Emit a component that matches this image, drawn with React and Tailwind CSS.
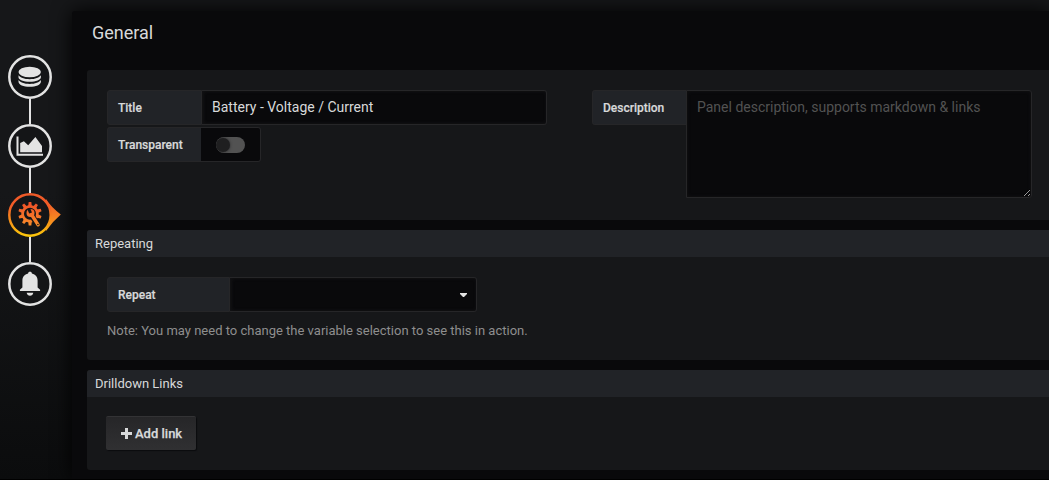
import React from "react";

function Ring({ children, active }) {
  return (
    <div className="relative z-10 flex h-11 w-11 shrink-0 items-center justify-center rounded-full">
      {!active && (
        <svg className="absolute top-0 left-0" width="44" height="44" viewBox="0 0 44 44">
          <circle cx="22" cy="22" r="20.700" fill="#141517" stroke="#e3e3e3" strokeWidth="2.500" />
        </svg>
      )}
      <div className="relative">{children}</div>
    </div>
  );
}

function Line() {
  return <div className="h-[25px] w-0.5 shrink-0 bg-[#e3e3e3]" />;
}

function DatabaseIcon() {
  return (
    <svg width="24" height="22" viewBox="0 0 24 22" fill="#e3e3e3">
      <ellipse cx="11.700" cy="6" rx="11.2" ry="5.3" />
      <path d="M.5 9.300C2 11.700 6.300 13.200 11.700 13.200S21.500 11.700 22.900 9.300v1.900c0 2.500-5 4.600-11.200 4.600S.5 13.700.5 11.200z" />
      <path d="M.5 14C2 16.400 6.300 17.900 11.700 17.900s9.800-1.500 11.200-3.900v1.700c0 2.900-5 5.100-11.200 5.100S.5 18.600.5 15.700z" />
    </svg>
  );
}

function ChartIcon() {
  return (
    <svg width="28" height="22" viewBox="0 0 28 22" fill="#e3e3e3">
      <path d="M.5 1.500h2v17.300H27v2H.5z" />
      <path d="M4.200 17.200V8L7.900 6.200l4.300 4.100 7.200-8.400 6.600 9v6.300z" />
    </svg>
  );
}

const TEETH = [0, 36, 72, 108, 144, 180, 216, 252, 288, 324];

function GearRing() {
  return (
    <svg className="absolute -top-[22px] -left-[22px]" width="54" height="44" viewBox="0 0 54 44">
      <defs>
        <linearGradient id="ring" x1="0" y1="0" x2="0" y2="44" gradientUnits="userSpaceOnUse">
          <stop offset="0" stopColor="#f05a28" />
          <stop offset="0.3" stopColor="#f15c27" />
          <stop offset="1" stopColor="#fbca0a" />
        </linearGradient>
        <linearGradient id="gear" x1="0" y1="9" x2="0" y2="34" gradientUnits="userSpaceOnUse">
          <stop offset="0" stopColor="#ef4e28" />
          <stop offset="1" stopColor="#f9902a" />
        </linearGradient>
        <linearGradient id="arrow" x1="0" y1="8" x2="0" y2="36" gradientUnits="userSpaceOnUse">
          <stop offset="0" stopColor="#f15b29" />
          <stop offset="1" stopColor="#f99f1e" />
        </linearGradient>
        <mask id="gearShape" maskUnits="userSpaceOnUse" x="0" y="0" width="54" height="44">
          <circle cx="22" cy="20.700" r="7.400" fill="none" stroke="white" strokeWidth="2.700" />
          {TEETH.map((a) => (
            <path key={a} d="M20.700 9h2.600l.5 4h-3.600z" fill="white" transform={"rotate(" + a + " 22 20.700)"} />
          ))}
          <path d="M24.500 23.500l5.500 9" stroke="black" strokeWidth="5.600" strokeLinecap="round" />
        </mask>
        <mask id="wrenchShape" maskUnits="userSpaceOnUse" x="0" y="0" width="54" height="44">
          <circle cx="22.500" cy="20" r="4" fill="white" />
          <path d="M23.500 21.500l6.600 10.300" stroke="white" strokeWidth="3.400" strokeLinecap="round" />
          <path d="M22.600 20L20.200 14.500" stroke="black" strokeWidth="3" />
          <circle cx="29.900" cy="31.500" r=".8" fill="black" />
        </mask>
      </defs>
      <path d="M38 6Q43 14 52.800 21.500Q44 29 38 38Z" fill="url(#arrow)" />
      <circle cx="22" cy="22" r="20.700" fill="#141517" stroke="url(#ring)" strokeWidth="2.500" />
      <rect width="44" height="44" fill="url(#gear)" mask="url(#gearShape)" />
      <rect width="44" height="44" fill="url(#gear)" mask="url(#wrenchShape)" />
    </svg>
  );
}

function BellIcon() {
  return (
    <svg width="22" height="26" viewBox="0 0 22 26" fill="#e3e3e3">
      <path d="M11 .7c1.100 0 1.900.7 1.900 1.700 3.700.8 5.700 3.500 5.700 7.100v6.900l2.500 2.400v1.300H.9v-1.300l2.500-2.400V9.500c0-3.600 2-6.300 5.700-7.100C9.100 1.400 9.900.7 11 .7z" />
      <path d="M7.700 21.800h6.600c-.3 1.900-1.600 3-3.300 3s-3-1.100-3.300-3z" />
    </svg>
  );
}

function Label({ children, className }) {
  return (
    <label className={"flex shrink-0 items-center rounded-l-[3px] border border-[#262628] bg-[#212327] pl-2.5 text-[12px] font-medium text-[#d8d9da] [-webkit-text-stroke:0.2px_#d8d9da] " + className}>
      {children}
    </label>
  );
}

function SectionHeader({ children }) {
  return <div className="h-[27px] rounded-tl-[3px] bg-[#212327] pl-2 text-[13px] leading-[27px]">{children}</div>;
}

export default function App() {
  return (
    <div className="flex h-[480px] w-[1049px] overflow-hidden border-b border-black bg-linear-to-b from-[#161719] from-40% to-[#0b0c0d] font-[Roboto,sans-serif] text-[#d8d9da]">
      <nav className="flex w-[72px] shrink-0 flex-col pt-[55px] pl-2">
        <div className="flex w-11 flex-col items-center">
          <Ring><DatabaseIcon /></Ring>
          <Line />
          <Ring><ChartIcon /></Ring>
          <Line />
          <Ring active><GearRing /></Ring>
          <Line />
          <Ring><BellIcon /></Ring>
        </div>
      </nav>
      <main className="mt-[11px] flex min-w-0 flex-1 flex-col rounded-tl-[3px] bg-[#09090b] pl-[15px] shadow-[0_0_20px_black]">
        <h1 className="h-[59px] shrink-0 pt-[9px] pl-[5px] text-[18px] leading-[26px]">General</h1>
        <section className="flex h-[150px] shrink-0 rounded-l-[3px] bg-[#161719] pt-5 pl-5">
          <div className="w-[485px]">
            <div className="mb-0.5 flex h-[35px]">
              <Label className="w-[95px]">Title</Label>
              <input className="w-[345px] rounded-r-[3px] border border-l-0 border-[#262628] bg-[#09090b] pt-px pr-2 pb-px pl-2.5 text-[14px] shadow-[inset_1px_0_3px_1px_#121214] outline-none" defaultValue="Battery - Voltage / Current" />
            </div>
            <div className="flex h-[35px]">
              <Label className="w-[94px] border-r-0">Transparent</Label>
              <div className="flex w-[60px] items-center rounded-r-[3px] border border-l-0 border-[#262628] bg-[#09090b] pl-[15px]">
                <div className="flex h-4 w-[29px] items-center overflow-hidden rounded-full bg-[#525252]">
                  <div className="h-3.5 w-3.5 rounded-full bg-[#1f1f20] shadow-[0_0_3px_#262628]" />
                </div>
              </div>
            </div>
          </div>
          <div className="flex items-start">
            <Label className="h-[35px] w-[94px] border-r-0">Description</Label>
            <textarea className="block h-[108px] w-[346px] resize rounded-r-[3px] border border-[#262628] bg-[#09090b] px-2.5 py-1.5 text-[14px] leading-5 shadow-[inset_0_0_3px_1px_#101012] outline-none placeholder:text-[#525252]" placeholder="Panel description, supports markdown &amp; links" />
          </div>
        </section>
        <section className="mt-2.5 h-[130px] shrink-0 rounded-l-[3px] bg-[#161719]">
          <SectionHeader>Repeating</SectionHeader>
          <div className="pt-5 pl-5">
            <div className="flex h-[35px]">
              <Label className="w-[123px]">Repeat</Label>
              <button type="button" aria-label="Repeat" className="flex w-[247px] items-center justify-end rounded-r-[3px] border border-l-0 border-[#262628] bg-[#09090b] pr-[9px] shadow-[inset_1px_0_3px_1px_#121214]">
                <svg width="7" height="4" viewBox="0 0 7 4"><path d="M0 0h7v1L4 4H3L0 1z" fill="#e3e3e3" /></svg>
              </button>
            </div>
            <p className="pt-[9px] text-[13px] leading-5 text-[#8e8e8e]">Note: You may need to change the variable selection to see this in action.</p>
          </div>
        </section>
        <section className="mt-2.5 h-[100px] shrink-0 rounded-l-[3px] bg-[#161719]">
          <SectionHeader>Drilldown Links</SectionHeader>
          <div className="pt-[19px] pl-[19px]">
            <button type="button" className="flex h-[34px] w-[90px] items-center gap-[3px] rounded-[2px] border-t border-[#333335] bg-linear-to-b from-[#262628] to-[#303032] pl-[15px] text-[13px] font-medium shadow-[1px_1px_1px_#0b0c0e] [-webkit-text-stroke:0.25px_#d8d9da]">
              <svg className="-mt-px" width="11" height="11" viewBox="0 0 11 11" fill="#d8d9da"><path d="M4 0h3v4h4v3H7v4H4V7H0V4h4z" /></svg>
              Add link
            </button>
          </div>
        </section>
      </main>
    </div>
  );
}
